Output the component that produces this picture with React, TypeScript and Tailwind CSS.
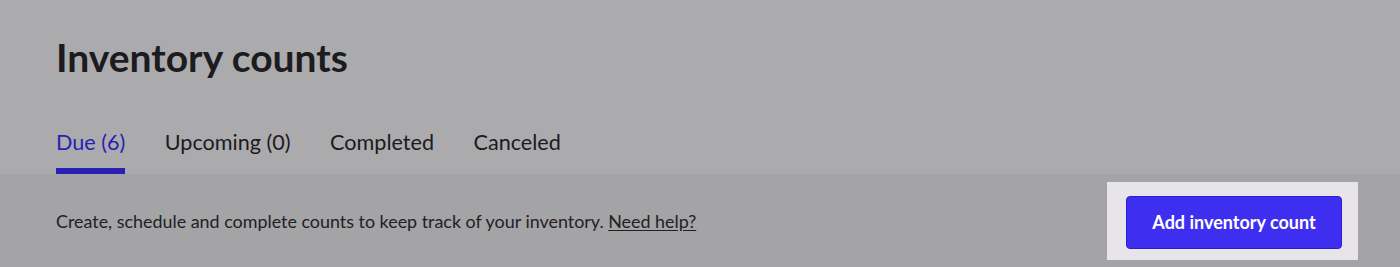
import { useState } from 'react';

// Inventory counts — header with tabs + intro row with primary action

const tabs = ['Due (6)', 'Upcoming (0)', 'Completed', 'Canceled'];

export default function App() {
  const [active, setActive] = useState(0);

  return (
    <div className="w-[1400px] h-[267px] flex flex-col bg-[#a4a3a6] text-[#1c1b1e] font-['Lato','Noto_Sans',sans-serif]">
      {/* Header */}
      <div className="bg-[#abaaad] px-14 pt-[33px]">
        <h1 className="text-[39px] leading-[48px] font-bold">Inventory counts</h1>
        <div className="flex gap-[39.5px] mt-[48px]">
          {tabs.map((t, i) => (
            <button
              key={t}
              onClick={() => setActive(i)}
              className={`flex flex-col text-[21.6px] leading-[26px] cursor-pointer
                ${i === active ? 'text-[#2b20b5]' : 'text-[#1c1b1e]'}`}
            >
              <span>{t}</span>
              <span className={`mt-[13px] h-[6px] w-full ${i === active ? 'bg-[#2b20b5]' : 'bg-transparent'}`} />
            </button>
          ))}
        </div>
      </div>

      {/* Intro row */}
      <div className="flex-1 flex items-center justify-between pl-14 pr-[42px]">
        <p className="text-[17.9px] leading-6 text-[#222124]">
          Create, schedule and complete counts to keep track of your inventory.{' '}
          <a href="#" className="underline underline-offset-2">Need help?</a>
        </p>
        <div className="bg-[#e7e5e9] pt-[14px] pb-[11px] pl-[19px] pr-[16px]">
          <button className="w-[216px] h-[53px] rounded-[4px] bg-[#3e2ff0] border border-[#2a1cd9] text-white text-[18px] font-bold cursor-pointer">
            Add inventory count
          </button>
        </div>
      </div>
    </div>
  );
}
